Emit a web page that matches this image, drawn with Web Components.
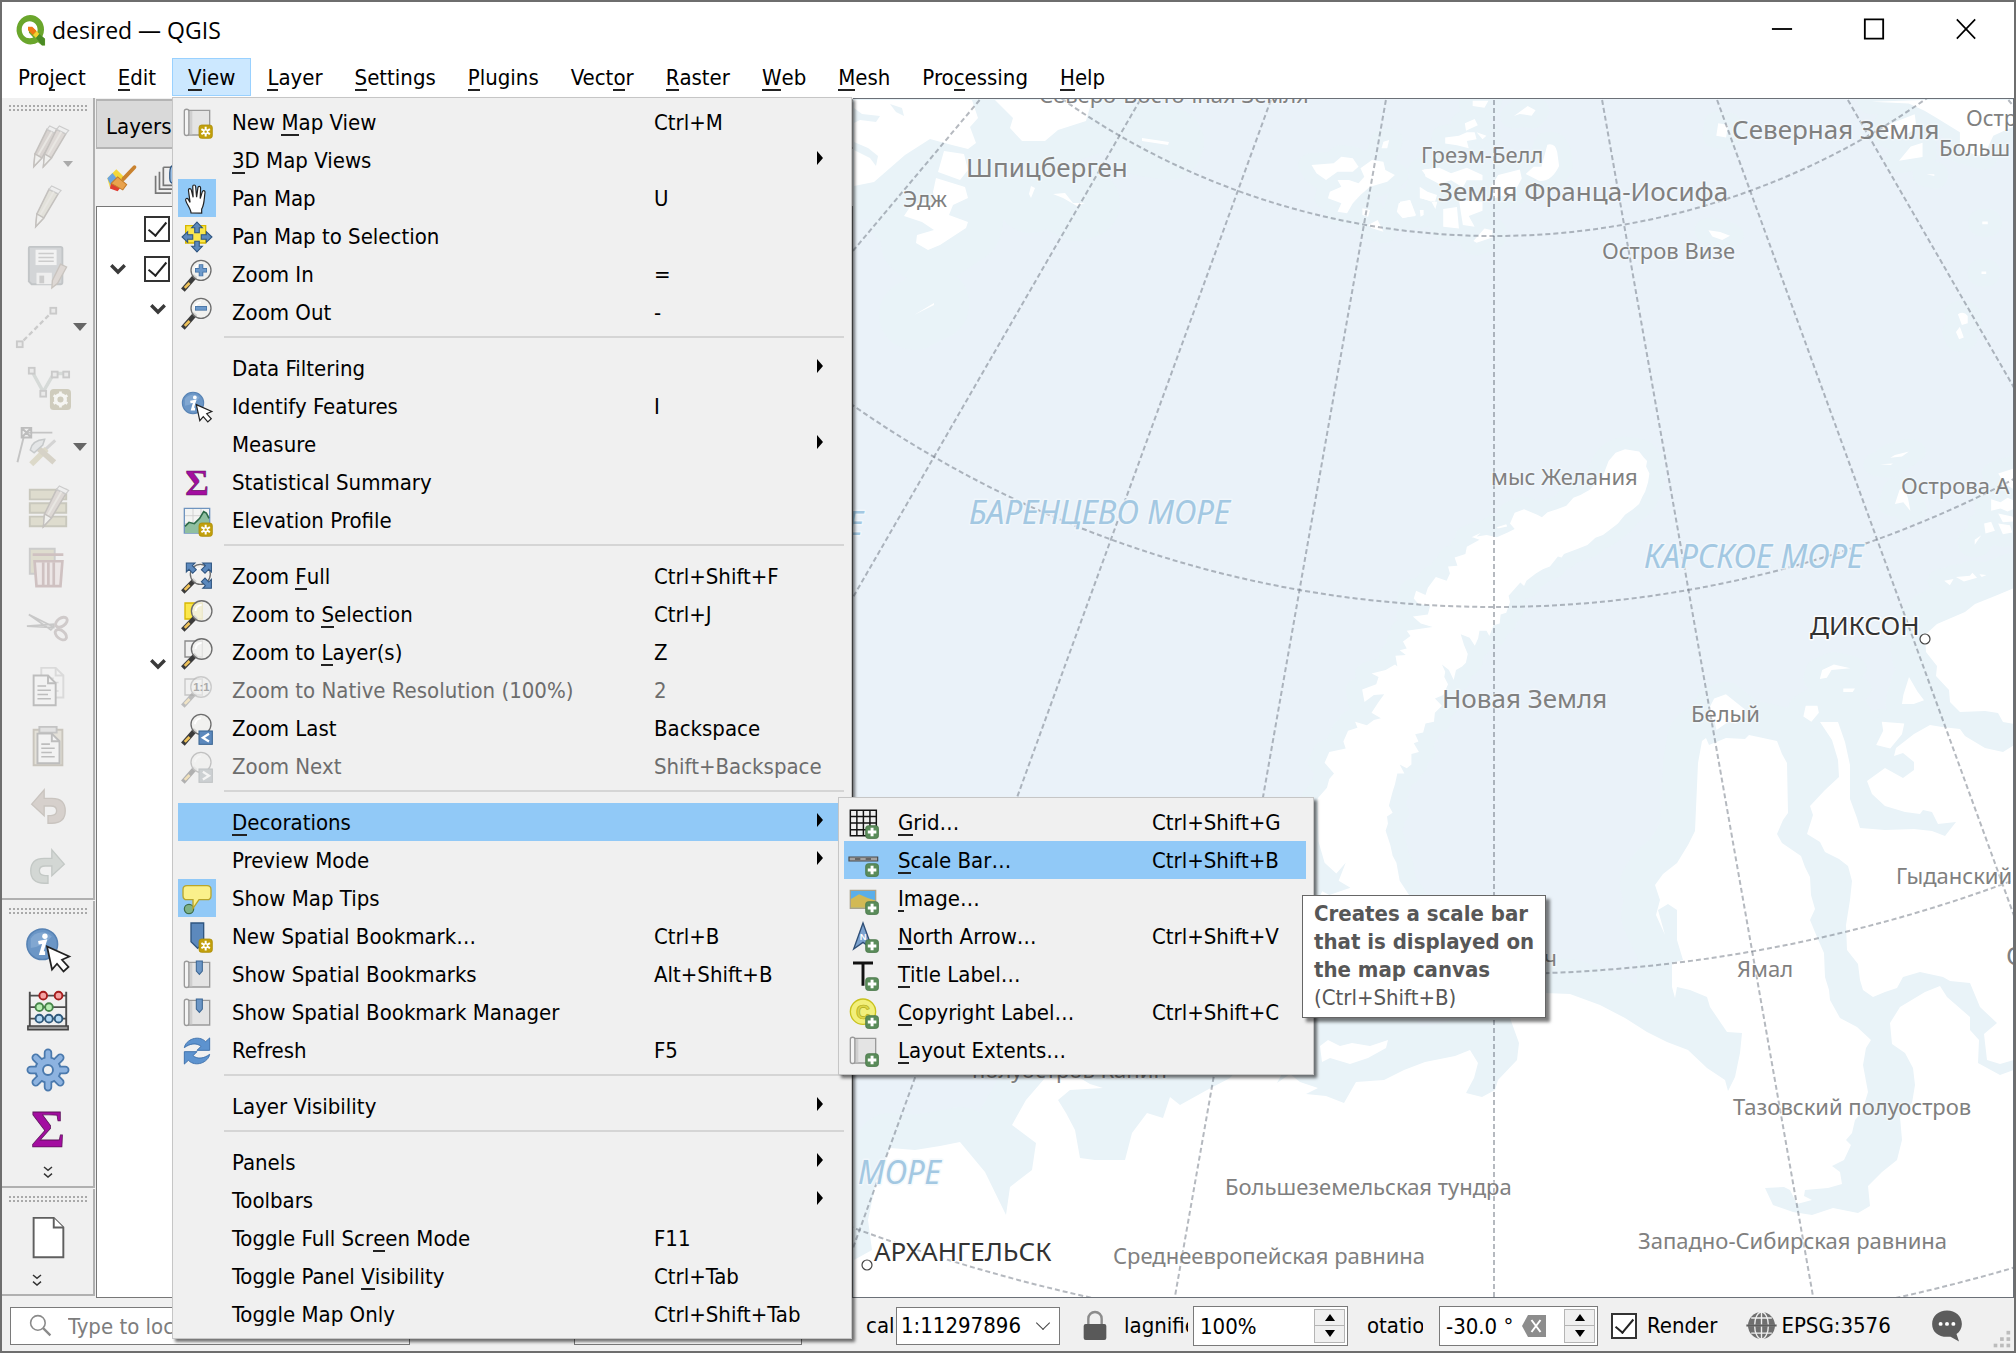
<!DOCTYPE html>
<html lang="en">
<head>
<meta charset="utf-8">
<title>desired — QGIS</title>
<style>
  html, body { margin: 0; height: 100%; }
  body { font: 22px/26px "DejaVu Sans Condensed", "Noto Sans", sans-serif; color: #000; background: #f0f0f0; overflow: hidden; }
</style>
</head>
<body>
<qgis-window></qgis-window>

<script>
/* ---------- icon library (24 unit grid) ---------- */
const glass = (x, y, r, o = 1) => `<g opacity="${o}"><path d="M${x - r * .7} ${y + r * .7}L2.6 22" stroke="#3b3b3b" stroke-width="3.6" stroke-linecap="square"/><path d="M6.4 18L2.8 21.7" stroke="#f0c35a" stroke-width="2"/><circle cx="${x}" cy="${y}" r="${r}" fill="#f1f1ef" fill-opacity=".85" stroke="#6d6d6d" stroke-width="1"/><path d="M${x - r * .6} ${y}a${r * .6} ${r * .6} 0 0 1 ${r * .6} -${r * .6}" stroke="#fff" stroke-width="1.4" fill="none"/></g>`;
const star = `<rect x="13.5" y="13.5" width="10" height="10" rx="2" fill="#c2a00c" stroke="#a98b06" stroke-width=".6"/><path d="M18.5 14.8v7.4M15.3 16.6l6.4 3.8M21.7 16.6l-6.4 3.8" stroke="#fff" stroke-width="1.5"/><circle cx="18.5" cy="18.5" r="1.9" fill="#fff"/><circle cx="18.5" cy="18.5" r=".9" fill="#c2a00c"/>`;
const plus = `<rect x="14" y="14" width="9.6" height="9.6" rx="2" fill="#5a8c5a" stroke="#477547" stroke-width=".6"/><path d="M18.8 15.6v6.4M15.6 18.8h6.4" stroke="#fff" stroke-width="2.2"/>`;
const scroll = `<path d="M4.5 2.5h17v18.5h-17z" fill="#e4e4e4" stroke="#9a9a9a"/><path d="M7 3v17.5" stroke="#cfcfcf" stroke-width="3"/><path d="M2.5 3.2q0-1.5 1.7-1.5t1.7 1.5v16.5q0 1.7-1.7 1.7t-1.7-1.7z" fill="#f4f4f4" stroke="#9a9a9a"/>`;
const info = `<circle cx="9" cy="9" r="8" fill="#6b96c6" stroke="#5682b4" stroke-width=".8"/><path d="M3 6a7 7 0 0 1 11-1q-4 5-11 6z" fill="#8fb2d8" opacity=".6"/><circle cx="10.4" cy="4.8" r="1.4" fill="#fff"/><path d="M7 8.2l3.3-.6-1.8 6h2" stroke="#fff" stroke-width="1.9" fill="none"/><path d="M11.5 10.2l2.6 12 2.6-3 3.4 4 2.6-2.4-3.4-3.7 3.8-1.7z" fill="#fff" stroke="#222" stroke-width=".9"/>`;
const pencil = (x, c) => `<g transform="translate(${x} 0)"><path d="M12.5 2.8l4.8 2.3-7.5 12.6-4.2 4.5.6-6.6z" fill="${c}" stroke="#c4c1be" stroke-width=".8"/><path d="M12.5 2.8l1.4-1.8 4.9 2.4-1.5 1.7z" fill="#efefef" stroke="#ccc" stroke-width=".6"/><path d="M6.2 15.6l3.6 2.1-4.2 4.5z" fill="#f0f0ee" stroke="#c4c1be" stroke-width=".7"/><path d="M15 4L8 16" stroke="#e8e6e2" stroke-width="1"/></g>`;
const square = (x, y) => `<rect x="${x}" y="${y}" width="3" height="3" fill="#eaeaea" stroke="#cacaca" stroke-width="1"/>`;
const sheet = (x, y, c) => `<path d="M${x} ${y}h7.5l4 4v11.500h-11.500z" fill="#f2f2f2" stroke="${c}" stroke-width="1"/><path d="M${x + 7.5} ${y}v4h4" fill="none" stroke="${c}"/><path d="M${x + 2} ${y + 5.500}h4.500m-4.500 2.200h7m-7 2.200h5.500m-5.500 2.200h7" stroke="${c}" stroke-width=".8"/>`;
const bookmark = `<path d="M11.500 1.500h4.500v7.500l-2.200 2.500-2.300-2.500z" fill="#6b96c6" stroke="#3d6794" stroke-width=".8"/>`;
const ICONS = {
  newmap: scroll + star,
  pan: `<path d="M7.500 22.500c0-3-3-6-4-9.500-.4-1.500 1.300-2 2-.7l1.300 2.200L5.600 5.600c-.2-1.700 1.700-2 2.100-.4l1.400 5.500-.3-8c0-1.600 2-1.600 2.200 0l.7 8 1-7.200c.2-1.500 2.100-1.300 2 .2l-.3 8 1.600-5.200c.5-1.400 2.200-.9 2 .6-.7 4.700-.4 9-2.500 12.500v3z" fill="#fff" stroke="#222" stroke-width=".9"/>`,
  pansel: `<path d="M3.500 3.500h15v13h-15z" fill="#fbe74b" stroke="#d8b800"/><g fill="#5c89bd" stroke="#2f5580" stroke-width=".8"><path d="M12 .8l4 4.200h-2.300v3.800h-3.400v-3.800h-2.300zM12 23.200l4-4.200h-2.300v-3.800h-3.400v3.800h-2.300zM.8 12l4.200-4v2.300h3.800v3.400h-3.800v2.300zM23.200 12l-4.200-4v2.300h-3.800v3.400h3.800v2.300z"/></g>`,
  zoomin: glass(15, 8.500, 7.500) + `<path d="M15 4v9M10.500 8.500h9" stroke="#3f6da0" stroke-width="3.400"/><path d="M15 4.500v8M11 8.500h8" stroke="#6d9acb" stroke-width="2.200"/>`,
  zoomout: glass(15, 8.500, 7.500) + `<path d="M10.500 8.500h9" stroke="#3f6da0" stroke-width="3.400"/><path d="M11 8.500h8" stroke="#6d9acb" stroke-width="2.200"/>`,
  identify: info,
  sigma: `<text x="12" y="21" text-anchor="middle" font-family="Liberation Serif" font-weight="bold" font-size="27" fill="#a30da0" stroke="#5a1458" stroke-width=".4">Σ</text>`,
  elev: `<path d="M2.500 2.500h19v18.500h-19z" fill="#f3f4f3" stroke="#6f94bf"/><path d="M9 3v18M15 3v18M3 8h18M3 14h18" stroke="#d0d0d0" stroke-width=".7"/><path d="M3 16l3-3 4 1 4-4 3-5 2 1 2 4v11h-18z" fill="#8fbfa0"/><path d="M3 16l3-3 4 1 4-4 3-5 2 1 2 4" fill="none" stroke="#2d6a48" stroke-width="1.200"/>` + star,
  zoomfull: glass(14.500, 10, 7.500) + `<g fill="#5c89bd" stroke="#2f5580" stroke-width=".8"><path d="M4 1.500h6.500l-2 2 3 3-2.700 2.700-2.800-3-2 2zM22.800 1.500h-6.500l2 2-3 3 2.700 2.700 2.800-3 2 2zM22.800 20.500h-6.500l2-2-3-3 2.700-2.700 2.800 3 2-2z"/></g>`,
  zoomsel: `<path d="M3 3h13v12h-13z" fill="#fbe74b" stroke="#d8b800"/>` + glass(15.500, 9, 7.700),
  zoomlayer: `<path d="M3 3h13v12h-13z" fill="#f0f0f0" stroke="#8a8a8a"/>` + glass(15.500, 9, 7.700),
  zoomnative: `<g opacity=".4"><path d="M3 3h13v12h-13z" fill="#f0f0f0" stroke="#8a8a8a"/>${glass(15, 9, 7.700, .7)}</g><text x="15.300" y="12" text-anchor="middle" font-family="Liberation Sans" font-weight="bold" font-size="8.500" fill="#a9a9a9">1:1</text>`,
  zoomlast: glass(15, 8.500, 7.500) + `<rect x="13.500" y="13.500" width="10" height="10" fill="#5c89bd" stroke="#3d6794" stroke-width=".8"/><path d="M21 15.600l-4.600 2.900 4.600 2.900" stroke="#fff" stroke-width="1.700" fill="none"/>`,
  zoomnext: glass(15, 8.500, 7.500, .35) + `<rect x="13.500" y="13.500" width="10" height="10" fill="#ccd0d2" stroke="#c0c3c5" stroke-width=".8"/><path d="M16.400 15.600l4.600 2.900-4.600 2.900" stroke="#f4f4f4" stroke-width="1.700" fill="none"/>`,
  maptips: `<circle cx="6" cy="19.500" r="3.500" fill="#7fb286" stroke="#3f6e49" stroke-width=".9"/><path d="M4.500 2h15q3 0 3 3v4.500q0 3-3 3h-6l-4.500 6.500v-6.500h-4.500q-3 0-3-3v-4.500q0-3 3-3z" fill="#faf08b" stroke="#b9a52a"/>`,
  bmnew: `<path d="M7.500 1.500h9.500v15l-4.500 4-5-5z" fill="#5c89bd" stroke="#2f5580"/>` + star,
  bmshow: scroll + bookmark,
  refresh: `<g fill="#5d93cf" stroke="#3a6eaa" stroke-width=".7"><path d="M2.500 9.500c1-6 10.500-10 16-4.500l3-2.800v9.300h-9.500l3-3c-3.500-3-8.500-2-12.500 1z"/><path d="M21.500 14.500c-1 6-10.500 10-16 4.500l-3 2.800v-9.300h9.500l-3 3c3.500 3 8.500 2 12.500-1z"/></g>`,
  grid: `<path d="M2.500 2.500h19.500v19h-19.500zM7.400 2.500v19M12.300 2.500v19M17.200 2.500v19M2.500 7.200h19.500M2.500 12h19.500M2.500 17h19.500" fill="none" stroke="#111" stroke-width="1.100"/>` + plus,
  scalebar: `<path d="M1.500 9h21.500v3h-21.500z" fill="#a3a3a3" stroke="#4a4a4a" stroke-width=".9"/><path d="M6 10.500h4M14 10.500h4" stroke="#666" stroke-width="1.500"/>` + plus,
  image: `<path d="M2.500 5.500h19v13.500h-19z" fill="#5aaeea" stroke="#a9a28c"/><path d="M3 12l6-3.500 7 3 5 1.500v5.500h-18z" fill="#d2b955"/>` + plus,
  north: `<path d="M12 1.500l7 19.500-7-5-7 5z" fill="#7da3cf" stroke="#2f4f77"/><text x="12" y="14.500" text-anchor="middle" font-family="Liberation Sans" font-weight="bold" font-size="7" fill="#fff">N</text>` + plus,
  title: `<path d="M4.500 3h15M12 3v17" stroke="#111" stroke-width="2.200" fill="none"/>` + plus,
  copyright: `<circle cx="12" cy="11" r="9.500" fill="#f2ef7b" stroke="#c9c21c"/><text x="12" y="16.200" text-anchor="middle" font-family="Liberation Sans" font-weight="bold" font-size="14.500" fill="#dcd648" stroke="#b1aa1c" stroke-width=".5">C</text>` + plus,
  extents: scroll + plus,
  pencils: pencil(-1, "#d8d3d0") + pencil(4, "#ded9d6"),
  pencil: pencil(0, "#e2e1da"),
  save: `<path d="M2.500 1.500h16q1 0 1 1v17.500q0 1-1 1h-15l-1.500-1.500v-17q0-1 .5-1z" fill="#d3d5d7" stroke="#c2c5c7"/><path d="M5.500 3h11v8h-11z" fill="#f2f2f2"/><path d="M7 5h8m-8 2h8m-8 2h8" stroke="#ccc" stroke-width=".8"/><path d="M6 15h8v6h-8z" fill="#eee"/><path d="M7.500 16.500h2.500v4h-2.500z" fill="#ccc"/><path d="M18.500 10.500l3.200 1.500-4.700 8.500-3 2.500.3-4z" fill="#ded8d4" stroke="#c9c4bf" stroke-width=".7"/>`,
  digitize: `<path d="M5 19L19 5" stroke="#cbcbcb" stroke-width="1.200" stroke-dasharray="2.500 1.500"/>` + square(1.500, 19.500) + square(19, 2),
  addfeature: `<path d="M3.500 3.500l6 11 5.500-9.500h6" stroke="#d6dad8" stroke-width="1.800" fill="none"/>` + square(2, 2) + square(8, 14) + square(14, 4) + square(20, 4) + `<rect x="13" y="13" width="11" height="11" rx="2" fill="#cfccbd"/><circle cx="18.500" cy="18.500" r="2.500" fill="none" stroke="#f5f5f2" stroke-width="1.800"/><path d="M18.500 14.300v2M18.500 20.700v2M14.900 16.400l1.700 1M20.400 19.600l1.700 1M22.100 16.400l-1.700 1M16.600 19.600l-1.700 1" stroke="#f5f5f2" stroke-width="1.400"/>`,
  vertex: `<path d="M6 4.500h14M5 7L1.800 20" stroke="#c4c4c4" stroke-width="1"/><path d="M4 2h5v5h-5zM4.500 2.500l4 4m0-4l-4 4" fill="none" stroke="#bdbdbd"/><path d="M21.500 8.500l-7.500 7" stroke="#d4d4d4" stroke-width="1.600"/><path d="M9 21l8-8" stroke="#dcd9c9" stroke-width="3"/><path d="M13 13l8 7" stroke="#d6d2c7" stroke-width="3"/><path d="M8.500 13.500q1-5 7.500-5.500l-1 3-4.500 4z" fill="#e4e6e7" stroke="#c6c9ca" stroke-width=".8"/>`,
  table: `<g fill="#dedcce" stroke="#c9c8bd"><path d="M2.500 3h19v5h-19zM2.500 10h19v5h-19zM2.500 17h19v5h-19z"/></g><g transform="translate(4 0)">${pencil(0, "#ddd8d5")}</g>`,
  trash: `<path d="M2.500 2.500h13v13h-13z" fill="#dedcce" stroke="#ccc"/><path d="M5 9h14.500l-1 13h-12.500z" fill="#ece6e6" stroke="#cfc1c1" stroke-width="1.400"/><path d="M4 5.500h16M9.500 9.500v12M12.200 9.500v12M15 9.500v12" stroke="#cfc1c1" stroke-width="1.400"/>`,
  scissors: `<path d="M2 5.500l13 6.500-1.500 1.500zM1 11.500l14-1v1.800z" fill="#eee" stroke="#c8c8c8" stroke-width=".9"/><g fill="none" stroke="#cfcaca" stroke-width="1.500"><ellipse cx="19" cy="9.500" rx="3.400" ry="2.100" transform="rotate(-35 19 9.500)"/><ellipse cx="18.700" cy="16" rx="3.400" ry="2.100" transform="rotate(40 18.700 16)"/></g>`,
  copy: `<g opacity=".55">${sheet(8.500, 2, "#c9c9c9")}</g>` + sheet(4.500, 6, "#bdbdbd"),
  paste: `<path d="M4.500 3h15v18.500h-15z" fill="#e4e1d9" stroke="#c9c5bd"/><path d="M7.500 1.500h9v3h-9z" fill="#e2e2e2" stroke="#c4c4c4"/>` + sheet(6.500, 5, "#bdbdbd"),
  undo: `<path d="M3.500 10.500l6.500-7.500v4.500h4q7 0 7 6.500t-7 6.500h-2v-4h1.500q3 0 3-2.500t-3-2.500h-3.500v5z" fill="#d6d0cc" stroke="#c9c4bf" stroke-width=".7"/>`,
  redo: `<path d="M20.500 10.500l-6.500-7.500v4.500h-4q-7 0-7 6.500t7 6.500h2v-4h-1.500q-3 0-3-2.500t3-2.500h3.500v5z" fill="#d3d7d4" stroke="#c3c8c5" stroke-width=".7"/>`,
  abacus: `<path d="M2.500 2.500v18M21.500 2.500v18M3 4.500h18.500M3 10.500h18.500M3 16.500h18.500" stroke="#4d4d4d" fill="none"/><path d="M1.500 20.300h21v2h-21z" fill="#999" stroke="#444" stroke-width=".8"/><g stroke-width="1"><g fill="#f5a3a3" stroke="#a51d1d"><circle cx="9.500" cy="4.500" r="2"/><circle cx="17.500" cy="4.500" r="2"/></g><g fill="#b9efb4" stroke="#47854a"><circle cx="7.500" cy="10.500" r="2"/><circle cx="12.500" cy="10.500" r="2"/></g><g fill="#b5daf5" stroke="#305a7c"><circle cx="7.500" cy="16.500" r="2"/><circle cx="12.500" cy="16.500" r="2"/><circle cx="17.500" cy="16.500" r="2"/></g></g>`,
  gear: `<g stroke="#4a79ad" stroke-width="4.400" stroke-linecap="round"><path d="M12 3v18M3 12h18M5.600 5.600l12.800 12.800M18.400 5.600L5.600 18.400"/></g><circle cx="12" cy="12" r="6.600" fill="#8db3e0" stroke="#4a79ad"/><g stroke="#8db3e0" stroke-width="2.600" stroke-linecap="round"><path d="M12 3v18M3 12h18M5.600 5.600l12.800 12.800M18.400 5.600L5.600 18.400"/></g><circle cx="12" cy="12" r="2.600" fill="#efefef" stroke="#4a79ad"/>`,
  page: `<path d="M4.500 1.500h10.500l5 5v15.500h-15.500z" fill="#fff" stroke="#5f5f5f"/><path d="M15 1.500v5h5" fill="#fff" stroke="#5f5f5f"/>`,
  brush: `<path d="M1 11l7-7 7 7-6 9-6-2z" fill="#f4d73b"/><path d="M1 11l4-4 4 5-5 5z" fill="#6ba4e0"/><path d="M4 15l6-2 3 3-4 5-6-2z" fill="#e03c31"/><path d="M9 10l7 6-3 4-9-5z" fill="#e9a24c" stroke="#c47b2a" stroke-width=".8"/><path d="M13.500 11.500l8.500-9" stroke="#c9822f" stroke-width="3" stroke-linecap="round"/>`,
  group: `<path d="M8 2.500h14M8 2.500v14h10M5 6v13.500h12M2 9v13.500h12" fill="none" stroke="#777" stroke-width="1.300"/><path d="M13 7q0-6 3-6v14q-3 0-3-4z" fill="#9fc2e6" stroke="#2f5580"/><rect x="15" y="16" width="9" height="8" fill="#5a8c5a"/>`,
  logo: `<path d="M12 .8a10.500 11 0 1 0 6 20.300l3 2.500h2.300v-5l-2-1.800a11 11 0 0 0 1.200-5A10.500 11 0 0 0 12 .8zm-.3 4.700c3.500 0 6 2.700 6 6.300 0 .7-.1 1.200-.3 1.800l-3-3h-3.200v3.500l3.300 3.500c-.9.400-1.800.6-2.800.6-3.500 0-5.900-2.800-5.900-6.400s2.400-6.300 5.900-6.300z" fill="#6aa62c"/><path d="M10.500 9.500h3.200l3.300 3.300-2.800 3-3.700-3.700z" fill="#ee7913"/><path d="M17 12.800l2 2.200-2.500 3-2.300-2.200z" fill="#f3d02f"/><path d="M16.500 18l2.500-3 4 3.500v5h-2z" fill="#4a8a25"/>`,
  search: `<circle cx="9.500" cy="9.500" r="7" fill="none" stroke="#8a8a8a" stroke-width="1.500"/><path d="M14.500 14.500l7 7" stroke="#8a8a8a" stroke-width="2.200"/>`,
  lock: `<path d="M7 11v-4.500a5 5 0 0 1 10 0v4.500" fill="none" stroke="#8c8c8c" stroke-width="1.800"/><rect x="3.500" y="10.500" width="17" height="12" rx="1.500" fill="#595959"/>`,
  globe: `<circle cx="12" cy="12" r="9.800" fill="#6f6f6f"/><path d="M12 2v20M2.500 12h19M4.500 6.500h15M4.500 17.500h15" stroke="#efefef" stroke-width="1" fill="none"/><ellipse cx="12" cy="12" rx="5" ry="9.800" fill="none" stroke="#efefef"/><path d="M1 12h22" stroke="#5e5e5e" stroke-width="1.500"/>`,
  chat: `<path d="M12 1c6 0 10.500 4 10.500 9.500 0 3-1.500 5.400-3.800 7.200l1.800 5.300-6-3.500c-8 1-13-3-13-9C1.500 5 6 1 12 1z" fill="#5c5c5c"/><g fill="#fff"><circle cx="7.500" cy="10.500" r="1.400"/><circle cx="12" cy="10.500" r="1.400"/><circle cx="16.500" cy="10.500" r="1.400"/></g>`,
  more: `<path d="M6 3l6 5 6-5M6 13l6 5 6-5" fill="none" stroke="#333" stroke-width="2.200"/>`,
  expand: `<path d="M3 7l9 9 9-9" fill="none" stroke="#3a3a3a" stroke-width="4.500"/>`,
  erase: `<path d="M0 12l6-11h18v22h-18z" fill="#8d8d8d"/><path d="M9.500 6l9 12M18.500 6l-9 12" stroke="#fff" stroke-width="2"/>`,
  grip: `<g fill="#bcbcbc"><rect x="18" y="2" width="4" height="4"/><rect x="18" y="9" width="4" height="4"/><rect x="18" y="16" width="4" height="4"/><rect x="11" y="9" width="4" height="4"/><rect x="11" y="16" width="4" height="4"/><rect x="4" y="16" width="4" height="4"/></g>`,
  minimize: `<path d="M1 12h22" stroke="#000" stroke-width="2"/>`,
  maximize: `<path d="M2 1.500h20v21h-20z" stroke="#000" stroke-width="2" fill="none"/>`,
  close: `<path d="M2 1.500l20 21M22 1.500l-20 21" stroke="#000" stroke-width="1.800"/>`
};

/* ---------- base class: open shadow root filled from a string ---------- */
class Part extends HTMLElement {
  connectedCallback() {
    if (this.shadowRoot) return;
    const t = document.createElement("template");
    t.innerHTML = `<style>*{box-sizing:border-box}button{font:inherit;color:inherit;background:none;border:0;padding:0;margin:0;text-align:left}</style>` + this.render();
    this.attachShadow({ mode: "open" }).append(t.content.cloneNode(true));
  }
}
const define = (name, render) => customElements.define(name, class extends Part { render() { return render(this); } });

define("q-icon", el => `<style>:host{display:block;width:var(--icon,32px);height:var(--icon,32px);flex:none}svg{display:block;width:100%;height:100%;overflow:visible}</style>
<svg viewBox="0 0 24 24" fill="none" aria-hidden="true">${ICONS[el.getAttribute("name")]}</svg>`);

/* ---------- title bar ---------- */
define("title-bar", () => `<style>
:host{display:flex;align-items:center;height:56px;box-sizing:border-box;background:#fff;padding:0 2px 0 12px;font:23px/28px "Open Sans",sans-serif}
h1{font:inherit;margin:0 auto 0 6px}
q-icon{--icon:32px}
button{width:92px;height:56px;display:flex;justify-content:center;align-items:center;padding-bottom:2px}
button q-icon{--icon:22px}
</style>
<q-icon name="logo"></q-icon><h1>desired — QGIS</h1>
<button aria-label="Minimize"><q-icon name="minimize"></q-icon></button>
<button aria-label="Maximize"><q-icon name="maximize"></q-icon></button>
<button aria-label="Close"><q-icon name="close"></q-icon></button>`);

/* ---------- menus ---------- */
define("menu-title", el => `<style>
:host{display:block;position:relative}
button{height:38px;padding:2px 15px 0;border:1px solid transparent;white-space:nowrap;display:block}
:host([open]) button{background:#cce8ff;border-color:#99d1ff}
::slotted(u){text-decoration:none;border-bottom:2px solid #222;line-height:22px;display:inline-block}
::slotted(menu-popup){position:absolute;left:0;top:39px;z-index:5}
</style><button><slot></slot></button><slot name="popup"></slot>`);

define("menu-popup", () => `<style>
:host{display:block;box-sizing:border-box;background:#f0f0f0;border:1px solid #c6c6c6;padding:5px 7px 5px 5px;box-shadow:3px 3px 3px rgba(0,0,0,.55);width:var(--menu-width)}
</style><slot></slot>`);

define("menu-line", () => `<style>:host{display:flex;height:18px;box-sizing:border-box;padding:5px 0 0 46px}i{flex:1;height:2px;background:#d5d5d5}</style><i></i>`);

define("menu-entry", el => {
  const icon = el.getAttribute("icon"), key = el.getAttribute("key");
  return `<style>
:host{display:block;position:relative}
:host([active]){background:#91c9f7}
:host([disabled]){color:#6d6d6d}
button{width:100%;height:38px;display:flex;align-items:center;white-space:nowrap}
.ic{width:38px;height:38px;margin-right:16px;display:flex;align-items:center;justify-content:center;padding-top:2px;flex:none}
:host([checked]) .ic{background:#91c9f7}
.tx{flex:1;padding-top:2px}
kbd{font:inherit;width:var(--key-width);flex:none;padding-top:2px}
.sub{width:0;height:0;border:solid transparent;border-width:7px 0 7px 6px;border-left-color:#000;margin:0 21px 4px 0}
::slotted(u){text-decoration:none;border-bottom:2px solid #222;line-height:22px;display:inline-block}
::slotted(menu-popup){position:absolute;left:calc(100% - 6px);top:-6px;z-index:6}
::slotted(tool-tip){position:absolute;left:calc(100% - 4px);top:54px;z-index:7}
</style><button><span class="ic">${icon ? `<q-icon name="${icon}"></q-icon>` : ""}</span><span class="tx"><slot></slot></span>${key ? `<kbd>${key}</kbd>` : ""}${el.hasAttribute("sub") ? `<span class="sub"></span>` : ""}</button><slot name="over"></slot>`;
});

define("tool-tip", () => `<style>
:host{display:block;box-sizing:border-box;background:#fff;border:1px solid #666;padding:4px 11px 5px;color:#575757;line-height:28px;white-space:nowrap;box-shadow:4px 4px 3px rgba(0,0,0,.5)}
</style><slot></slot>`);

define("menu-bar", () => `<style>
:host{display:flex;height:40px;background:#fff;position:relative;z-index:4}
.view{--menu-width:680px;--key-width:190px}
.deco{--menu-width:476px;--key-width:154px}
</style>
<menu-title>Pro<u>j</u>ect</menu-title><menu-title><u>E</u>dit</menu-title>
<menu-title open><u>V</u>iew
<menu-popup slot="popup" class="view">
<menu-entry icon="newmap" key="Ctrl+M">New <u>M</u>ap View</menu-entry>
<menu-entry sub><u>3</u>D Map Views</menu-entry>
<menu-entry icon="pan" checked key="U">Pan Map</menu-entry>
<menu-entry icon="pansel">Pan Map to Selection</menu-entry>
<menu-entry icon="zoomin" key="=">Zoom In</menu-entry>
<menu-entry icon="zoomout" key="-">Zoom Out</menu-entry>
<menu-line></menu-line>
<menu-entry sub>Data Filtering</menu-entry>
<menu-entry icon="identify" key="I">Identify Features</menu-entry>
<menu-entry sub>Measure</menu-entry>
<menu-entry icon="sigma">Statistical Summary</menu-entry>
<menu-entry icon="elev">Elevation Profile</menu-entry>
<menu-line></menu-line>
<menu-entry icon="zoomfull" key="Ctrl+Shift+F">Zoom <u>F</u>ull</menu-entry>
<menu-entry icon="zoomsel" key="Ctrl+J">Zoom to <u>S</u>election</menu-entry>
<menu-entry icon="zoomlayer" key="Z">Zoom to <u>L</u>ayer(s)</menu-entry>
<menu-entry icon="zoomnative" key="2" disabled>Zoom to Native Resolution (100%)</menu-entry>
<menu-entry icon="zoomlast" key="Backspace">Zoom Last</menu-entry>
<menu-entry icon="zoomnext" key="Shift+Backspace" disabled>Zoom Next</menu-entry>
<menu-line></menu-line>
<menu-entry sub active><u>D</u>ecorations
  <menu-popup slot="over" class="deco">
  <menu-entry icon="grid" key="Ctrl+Shift+G"><u>G</u>rid…</menu-entry>
  <menu-entry icon="scalebar" key="Ctrl+Shift+B" active><u>S</u>cale Bar…<tool-tip slot="over"><b>Creates a scale bar<br>that is displayed on<br>the map canvas</b><br>(Ctrl+Shift+B)</tool-tip></menu-entry>
  <menu-entry icon="image"><u>I</u>mage…</menu-entry>
  <menu-entry icon="north" key="Ctrl+Shift+V"><u>N</u>orth Arrow…</menu-entry>
  <menu-entry icon="title"><u>T</u>itle Label…</menu-entry>
  <menu-entry icon="copyright" key="Ctrl+Shift+C"><u>C</u>opyright Label…</menu-entry>
  <menu-entry icon="extents"><u>L</u>ayout Extents…</menu-entry>
  </menu-popup>
</menu-entry>
<menu-entry sub>Preview Mode</menu-entry>
<menu-entry icon="maptips" checked>Show Map Tips</menu-entry>
<menu-entry icon="bmnew" key="Ctrl+B">New Spatial Bookmark…</menu-entry>
<menu-entry icon="bmshow" key="Alt+Shift+B">Show Spatial Bookmarks</menu-entry>
<menu-entry icon="bmshow">Show Spatial Bookmark Manager</menu-entry>
<menu-entry icon="refresh" key="F5">Refresh</menu-entry>
<menu-line></menu-line>
<menu-entry sub>Layer Visibility</menu-entry>
<menu-line></menu-line>
<menu-entry sub>Panels</menu-entry>
<menu-entry sub>Toolbars</menu-entry>
<menu-entry key="F11">Toggle Full Scr<u>e</u>en Mode</menu-entry>
<menu-entry key="Ctrl+Tab">Toggle Panel <u>V</u>isibility</menu-entry>
<menu-entry key="Ctrl+Shift+Tab">Toggle Map Only</menu-entry>
</menu-popup></menu-title>
<menu-title><u>L</u>ayer</menu-title><menu-title><u>S</u>ettings</menu-title><menu-title><u>P</u>lugins</menu-title>
<menu-title>Vect<u>o</u>r</menu-title><menu-title><u>R</u>aster</menu-title><menu-title><u>W</u>eb</menu-title><menu-title><u>M</u>esh</menu-title>
<menu-title>Pro<u>c</u>essing</menu-title><menu-title><u>H</u>elp</menu-title>`);

/* ---------- vertical tool bars ---------- */
define("tool-strip", () => `<style>
:host{display:flex;flex-direction:column;border-right:2px solid #b0b0b0;border-bottom:2px solid #b0b0b0;padding-bottom:1px}
i{height:7px;margin:6px 4px 6px 6px;background:radial-gradient(circle,#a9a9a9 1px,transparent 1.500px) 0 0/4px 4px;flex:none}
</style><i></i><slot></slot>`);
define("tool-button", el => `<style>
:host{display:block}
button{width:100%;height:60px;display:flex;align-items:center;justify-content:center;position:relative}
q-icon{--icon:46px}
:host([menu]) q-icon{margin-right:22px}
:host([menu]) button::after,:host([corner]) button::after{content:"";position:absolute;right:6px;top:26px;border:solid transparent;border-width:8px 7px 0;border-top-color:#666}
:host([corner]) button::after{right:20px;top:44px;border-width:6px 5px 0;border-top-color:#aaa}
:host([more]) button{height:25px}:host([more]) q-icon{--icon:16px}
:host([left]) q-icon{margin-right:22px}
</style><button aria-label="${el.getAttribute("icon")}"><q-icon name="${el.getAttribute("icon")}"></q-icon></button>`);
define("tool-column", () => `<style>:host{display:flex;flex-direction:column;width:93px;flex:none;gap:1px}</style>
<tool-strip><tool-button icon="pencils" corner></tool-button><tool-button icon="pencil"></tool-button><tool-button icon="save"></tool-button><tool-button icon="digitize" menu></tool-button><tool-button icon="addfeature"></tool-button><tool-button icon="vertex" menu></tool-button><tool-button icon="table"></tool-button><tool-button icon="trash"></tool-button><tool-button icon="scissors"></tool-button><tool-button icon="copy"></tool-button><tool-button icon="paste"></tool-button><tool-button icon="undo"></tool-button><tool-button icon="redo"></tool-button></tool-strip>
<tool-strip><tool-button icon="identify"></tool-button><tool-button icon="abacus"></tool-button><tool-button icon="gear"></tool-button><tool-button icon="sigma"></tool-button><tool-button icon="more" more></tool-button></tool-strip>
<tool-strip><tool-button icon="page"></tool-button><tool-button icon="more" more left></tool-button></tool-strip>`);

/* ---------- layers dock ---------- */
define("check-box", el => `<style>
:host{display:inline-flex}label{display:flex;align-items:center;gap:10px}
input{appearance:none;margin:0;width:26px;height:26px;border:2px solid #333;background:#fff;display:grid;place-items:center}
input:checked::after{content:"";width:8px;height:16px;border:solid #222;border-width:0 2px 2px 0;transform:rotate(40deg) translate(-1px,-2px)}
</style><label><input type="checkbox" checked aria-label="${el.getAttribute("name")}"><slot></slot></label>`);
define("layers-dock", () => `<style>
:host{display:flex;flex-direction:column;width:757px;flex:none}
h2{font:inherit;margin:1px 0 0;height:50px;background:#d9d9d9;border:solid #b4b4b4;border-width:2px 0 2px 1px;padding:13px 9px 0}
.bar{height:57px;display:flex;align-items:center;gap:16px;padding:4px 10px 0;--icon:31px}
.tree{flex:1;background:#fff;border:1px solid #777;padding-top:2px}
.row{height:40px;display:flex;align-items:center;gap:17px;--icon:18px}
.a{padding-left:47px}.b{padding-left:12px}.c{padding-left:52px}.gap{height:315px}
</style><h2>Layers</h2><div class="bar"><q-icon name="brush"></q-icon><q-icon name="group"></q-icon></div>
<div class="tree"><div class="row a"><check-box name="Layer 1"></check-box></div><div class="row b"><q-icon name="expand"></q-icon><check-box name="Layer 2"></check-box></div><div class="row c"><q-icon name="expand"></q-icon></div><div class="gap"></div><div class="row c"><q-icon name="expand"></q-icon></div></div>`);

/* ---------- map canvas: polar graticule, land and labels ---------- */
const POLE = [1494, -513];
const meridians = [-50, -40, -30, -20, -10, 0, 10, 20, 30, 40].map(a => {
  const t = Math.tan(a * Math.PI / 180);
  return `M${(POLE[0] + 613 * t).toFixed(1)} 100L${(POLE[0] + 1811 * t).toFixed(1)} 1298`;
}).join("");
const parallels = [749, 1120, 1487, 1855].map(r => `<circle cx="${POLE[0]}" cy="${POLE[1]}" r="${r}"/>`).join("");
const LAND = `
<path transform="translate(1280 420) scale(.4694 .3571)" d="M735 82L765 88 775 105 782 115 780 130 787 150 784 175 778 200 772 215 765 235 752 250 735 265 720 290 700 310 688 322 672 330 655 350 632 362 605 375 600 385 592 382 575 410 560 418 545 430 525 450 520 465 512 455 495 480 487 492 490 510 482 540 470 545 468 570 455 575 446 605 440 590 425 590 422 612 415 632 404 610 385 600 392 630 400 655 396 680 388 690 375 700 370 728 360 700 345 685 352 705 350 720 358 740 348 770 330 780 345 800 330 820 328 845 310 850 305 875 288 880 295 900 285 905 296 930 280 935 280 965 270 975 255 965 265 990 250 990 245 1020 240 1040 232 1080 240 1100 228 1110 230 1130 225 1150 235 1190 240 1220 248 1240 255 1290 275 1330 300 1400 60 1400 90 1320 105 1330 150 1310 125 1290 140 1240 120 1270 95 1240 82 1180 80 1060 100 1030 105 1005 115 990 95 960 105 930 140 920 135 900 145 870 165 862 160 845 185 855 200 840 215 835 195 820 210 790 222 768 200 770 180 790 175 755 205 740 210 720 195 710 225 700 245 685 250 690 246 660 268 658 255 645 270 640 262 620 278 605 270 590 325 580 300 570 283 550 315 545 320 520 295 515 285 500 290 478 310 490 315 470 332 440 355 450 362 430 358 410 378 408 372 385 395 375 398 355 425 335 410 328 440 322 462 328 485 315 500 305 490 290 500 260 520 250 548 265 558 272 570 258 590 250 610 240 625 218 640 210 660 195 690 150 700 115 715 92zM462 300l20-8 2 6-20 6zM408 328l20-12-12 14zM950 768L990 810 985 840 970 850 955 845 930 868 925 840 905 830 925 780zM1340 720L1358 760 1372 785 1350 795 1325 795 1328 770zM1282 845L1330 850 1325 880 1300 920 1270 910 1285 870zM1120 800L1145 800 1148 820 1132 845 1115 830zM1150 725L1155 700 1180 685 1215 695 1175 700 1165 722zM1200 752h25l-5 10h-20zM1310 98l30-10-15 14-25 4zM1278 124l28-2-5 4zM1330 190l8 30 5 35-15-25-18 5 10-40zM1415 450l20-5-8 18zM1440 440l30-4 5-8 10 14-28 10zM1490 432l15 2-10 6zM1530 150l35-15v60l-20-15zM1515 222l20 8 15-12 20 12v16l-20 10-15-8-20 6zM1530 262l30 8 8 14-28 2zM1500 290l15-5 8 25-20 8zM1530 290l25 5 5 20-20 5zM1480 335l14-12-14 26z"/>
<path d="M2014 588L1995 596 1975 604 1965 612 1937 624 1925 635 1926 652 1937 666 1936 676 1949 690 1950 702 1960 712 1985 711 1998 713 2003 722 2014 724z"/>
<path d="M2014 745L2003 752 1985 748 1965 736 1960 729 1942 727 1930 725 1914 734 1896 748 1894 756 1903 753 1914 762 1914 770 1903 778 1885 768 1867 781 1872 794 1885 806 1905 812 1920 814 1923 810 1932 812 1938 824 1956 822 1945 836 1932 831 1914 829 1885 830 1860 828 1857 818 1850 799 1850 765 1845 742 1838 722 1820 722 1832 740 1838 760 1839 777 1825 790 1810 806 1813 815 1807 834 1820 842 1825 852 1839 859 1848 866 1852 881 1850 900 1846 925 1847 950 1858 964 1860 980 1863 990 1873 997 1885 992 1897 988 1903 977 1920 972 1943 977 1950 981 1970 983 1980 1007 1997 1023 1984 1034 1987 1060 2000 1064 2014 1060z"/>
<path d="M1702 741L1706 738 1709 745 1726 738 1745 739 1749 735 1777 741 1782 754 1787 763 1788 813 1783 820 1777 834 1782 843 1801 856 1805 867 1810 877 1811 895 1815 909 1810 920 1817 937 1824 953 1825 977 1829 990 1830 1000 1840 1018 1857 1027 1871 1040 1866 1048 1863 1065 1868 1092 1862 1112 1855 1120 1852 1133 1846 1140 1851 1145 1844 1160 1832 1166 1840 1172 1842 1184 1828 1188 1805 1190 1804 1196 1812 1200 1797 1204 1790 1190 1784 1187 1765 1188 1773 1205 1793 1212 1812 1215 1833 1208 1858 1213 1870 1206 1868 1186 1882 1172 1897 1160 1902 1140 1900 1117 1912 1103 1915 1085 1913 1068 1905 1053 1892 1044 1890 1023 1900 1007 1925 992 1940 986 1947 997 1970 1017 1970 1030 1979 1040 1978 1063 2000 1075 2014 1070V1300H854V1260L872 1250 868 1220 876 1182 890 1148 915 1150 940 1146 960 1142 985 1172 1006 1215 1010 1187 1032 1170 1036 1143 1012 1125 1026 1100 1045 1078 1080 1078 1090 1084 1103 1088 1070 1090 1058 1100 1066 1113 1075 1130 1080 1158 1095 1160 1125 1160 1132 1133 1147 1113 1163 1118 1170 1097 1180 1105 1207 1090 1230 1078 1246 1060 1270 1057 1277 1063 1290 1056 1284 1070 1277 1083 1290 1074 1300 1082 1318 1088 1306 1094 1326 1096 1344 1103 1356 1082 1384 1080 1404 1070 1425 1062 1455 1056 1470 1050 1478 1063 1474 1078 1466 1093 1482 1097 1495 1090 1498 1080 1517 1060 1519 1043 1510 1018 1480 1000 1545 993 1570 994 1600 1005 1625 1018 1647 1032 1667 1042 1688 1050 1707 1068 1725 1080 1728 1091 1735 1077 1740 1053 1742 1033 1727 1032 1710 1007 1707 997 1690 990 1677 987 1675 998 1672 987 1672 963 1683 960 1677 940 1677 910 1668 904 1658 910 1665 935 1656 915 1660 900 1655 885 1663 874 1677 863 1688 845 1695 831 1698 763z"/>
<path d="M1320 1046L1328 1040 1340 1046 1352 1043 1370 1046 1388 1040 1386 1048 1368 1058 1350 1064 1330 1058 1322 1062zM854 100H972L978 118 970 127 976 143 968 149 952 145 930 139 905 155 874 182 854 186zM944 151L964 154 968 170 960 180 938 172zM936 178L965 187 968 198 953 205 949 215 968 222 966 228 940 245 928 250 916 243 917 235 934 230 922 222 904 216 912 204 936 202 933 192zM995 100H1092L1086 121 1058 130 1045 141 1022 141 1010 128 1013 118zM1142 138l27 4-1 3-26-4zM1031 186l4 2-4 10-2-4zM1053 194l12-1 8 10 12 0-8 3-14-8zM914 315l20-12v2z"/>
<path transform="translate(840 90) scale(.3827 .3333)" d="M1232 225L1290 220 1310 200 1340 205 1355 230 1340 245 1300 245 1270 270 1245 250zM1360 235L1390 210 1420 215 1425 240 1450 255 1430 275 1385 290 1360 315 1340 340 1325 370 1300 365 1310 340 1275 325 1280 305 1310 290 1300 270 1330 270 1355 280 1370 260zM1420 155l15-5-5 25-15 0zM1365 355l20 5-5 20-15-5zM1380 405l25-15 15 35-30-10zM1460 340l30-10 15 45-35 10-15-20zM1515 290l20 15 25 10-5 20-40-10zM1520 240l40-5v25l-30-5zM1515 360l10 0 0 15-8 5z"/>
<path transform="translate(1400 0) scale(.3929 .3571)" d="M185 282h40l-10 20-30-5zM290 325l35-28 20 12-10 15-30-5zM165 345l25-12 8 18-30 15zM115 385l35-5 20-10 20 0 5 20-25 5 5 20-30-8-30-5zM195 370l25 10-10 10zM375 405q20-5 25 20l5 40q-20 45-50 42l-35-20 20-20 20 0zM60 475l40-5 30 15 40-15 40 20 0 15-40 0-10 20-30-20-30 10-35-20zM250 490l55-15 5 25-20 40-50 15-10-30zM50 525l15 15 20 10-5 15-25-10zM0 565l25-5 15 45-30 5-10-10zM80 565l15 0-5 20zM110 585l35-5 5 60-40-5zM150 560l60 5 0 25-35 15 15 30-30-5zM215 640l20 5 0 20-40 15-8-5zM785 645l30 5 25 10-20 12-25-10zM810 345l25 5-5 35-25-5zM1200 285l130-5 30 0h210v70l-60 30-25 60-60-20 0-50-60-40-30-20-40-20zM1240 350l70-30 5 40-50 30-30-15zM1300 410l30-10 0 40-60 10zM1340 488l20 0 0 5zM1420 880q15-10 25 5l0 20-15 5zM1425 915l10 30-12 5-8-20zM1482 620h14v8h-14zM1480 760h12v7h-12z"/>`;
/* inlets and fjords cut back out of the land */
const WATER = `<path d="M854 108l8 6 18 2-4 6-16-2-6 3zM890 104l12 4 2 8-8-4zM854 142l14 6 10 8-2 10-6-8-16-8z"/>`;
const LABELS = [
  ["l", 1039, 103, "Северо-Восточная Земля"], ["m", 966, 177, "Шпицберген"], ["l", 903, 207, "Эдж"], ["l", 1421, 163, "Греэм-Белл"],
  ["m", 1438, 201, "Земля Франца-Иосифа"], ["m", 1732, 139, "Северная Земля"], ["l", 1966, 126, "Остр"], ["l", 1939, 156, "Больш"],
  ["l", 1602, 259, "Остров Визе"], ["l", 1491, 485, "мыс Желания"], ["l", 1901, 494, "Острова А"], ["m", 1442, 708, "Новая Земля"],
  ["l", 1691, 722, "Белый"], ["l", 1896, 884, "Гыданский"], ["l", 1737, 977, "Ямал"], ["l", 1733, 1115, "Тазовский полуостров"],
  ["l", 1544, 966, "ч"], ["m", 2006, 965, "О"], ["l", 972, 1078, "полуостров Канин"], ["l", 1225, 1195, "Большеземельская тундра"],
  ["l", 1113, 1264, "Среднеевропейская равнина"], ["l", 1638, 1249, "Западно-Сибирская равнина"],
  ["s", 969, 524, "БАРЕНЦЕВО МОРЕ"], ["s", 1644, 568, "КАРСКОЕ МОРЕ"], ["s", 847, 535, "Е"], ["s", 858, 1184, "МОРЕ"],
  ["t", 1810, 635, "ДИКСОН"], ["t", 874, 1261, "АРХАНГЕЛЬСК"]
];
define("map-canvas", () => `<style>
:host{display:block;flex:1;min-width:0;border:solid #6b7077;border-width:1px 1px 1px 0;overflow:hidden;background:#eaf2f9}
svg{display:block;width:100%;height:100%}
text{font-family:"Noto Sans",sans-serif;fill:#808080;paint-order:stroke;stroke:#fff;stroke-opacity:.35;stroke-width:3px;stroke-linejoin:round}
.l{font-size:22px}.m{font-size:26px}.s{font-size:32px;font-style:italic;fill:#a3c8e2;stroke:#f2f8fc;stroke-opacity:.8}.t{font-size:26px;fill:#333;stroke-opacity:.9}
</style>
<svg viewBox="853 99 1160 1198" preserveAspectRatio="xMinYMin slice" role="img" aria-label="Map">
<g fill="#e9f3f8" stroke="#e9f3f8" stroke-width="70" stroke-linejoin="round">${LAND}</g>
<g fill="#fff">${LAND}</g><g fill="#e9f3f8">${WATER}</g>
<g fill="none" stroke="#6b7480" stroke-opacity=".5" stroke-width="2" stroke-dasharray="5 3"><path d="${meridians}"/>${parallels}</g>
${LABELS.map(([c, x, y, t]) => `<text class="${c}" x="${x}" y="${y}">${t}</text>`).join("")}
<g fill="#fff" stroke="#444" stroke-width="1.200"><circle cx="1925" cy="639" r="5"/><circle cx="867" cy="1265" r="5"/></g>
</svg>`);

/* ---------- status bar ---------- */
define("spin-box", el => `<style>
:host{display:flex;height:40px;box-sizing:border-box;width:var(--w);border:1px solid #7a7a7a;background:#fff;align-items:center;padding:2px 2px 2px 6px;flex:none}
input{font:inherit;flex:1;min-width:0;border:0;padding:3px 0 0;background:none;outline:0}
q-icon{--icon:24px;margin-right:18px}
.st{display:flex;flex-direction:column;width:31px;height:100%}
.st button{flex:1;background:#f0f0f0;border:1px solid #b5b5b5;display:grid;place-items:center}
.st button+button{border-top:0}
.st button::after{content:"";border:solid transparent;border-width:0 5px 7px;border-bottom-color:#000}
.st button+button::after{border-width:7px 5px 0;border-top-color:#000}
</style><input type="text" value="${el.getAttribute("value")}" aria-label="${el.getAttribute("label")}">${el.hasAttribute("clear") ? `<q-icon name="erase"></q-icon>` : ""}<span class="st"><button aria-label="Up"></button><button aria-label="Down"></button></span>`);
define("status-bar", () => `<style>
:host{display:flex;align-items:center;height:53px;box-sizing:border-box;padding:2px 2px 0 8px;background:#f0f0f0;overflow:hidden}
.find{width:400px;height:38px;border:1px solid #7a7a7a;background:#fff;display:flex;align-items:center;padding-left:17px;gap:15px;--icon:25px;flex:none}
.find input{font:inherit;border:0;flex:1;min-width:0;background:none;padding:3px 0 0}
.find input::placeholder{color:#7d7d7d;opacity:1}
.coord{font:inherit;width:228px;height:38px;border:1px solid #7a7a7a;background:#fff;margin-left:164px;flex:none}
label,.mag,.rot{white-space:nowrap;flex:none}
.cal{width:26px;margin-left:64px}
select{appearance:none;font:inherit;color:#000;width:164px;height:38px;border:1px solid #7a7a7a;padding:0 30px 0 4px;background:#fff;border-radius:0}
.combo{position:relative;margin-left:4px;display:flex}
.combo::after{content:"";position:absolute;right:12px;top:11px;width:9px;height:9px;border:solid #444;border-width:0 1px 1px 0;transform:rotate(45deg)}
.lock{--icon:32px;margin-left:19px}
.mag{width:64px;margin-left:13px;overflow:hidden}
.s1{--w:155px;margin-left:5px}
.rot{width:56px;margin-left:19px;overflow:hidden}
.s2{--w:159px;margin-left:16px}
check-box{margin-left:13px}
.crs{display:flex;align-items:center;gap:3px;margin-left:28px;--icon:33px}
.chat{--icon:34px;margin-left:auto}
.size{--icon:22px;align-self:flex-end;margin-left:26px}
</style>
<label class="find"><q-icon name="search"></q-icon><input type="text" placeholder="Type to locate (Ctrl+K)" aria-label="Locate"></label>
<input class="coord" type="text" aria-label="Coordinate">
<label class="cal" for="scale">cal</label><span class="combo"><select id="scale"><option>1:11297896</option></select></span>
<button class="lock" aria-label="Lock scale"><q-icon name="lock"></q-icon></button>
<span class="mag">lagnifie</span><spin-box class="s1" value="100%" label="Magnifier"></spin-box>
<span class="rot">otatio</span><spin-box class="s2" value="-30.0 °" label="Rotation" clear></spin-box>
<check-box name="Render">Render</check-box>
<button class="crs"><q-icon name="globe"></q-icon>EPSG:3576</button>
<button class="chat" aria-label="Messages"><q-icon name="chat"></q-icon></button>
<q-icon class="size" name="grip"></q-icon>`);

define("qgis-window", () => `<style>
:host{display:flex;flex-direction:column;box-sizing:border-box;height:100vh;border:2px solid #6e6e6e;background:#f0f0f0;overflow:hidden}
main{flex:1;min-height:0;display:flex;overflow:hidden}
tool-column{margin-right:1px}
</style><title-bar></title-bar><menu-bar></menu-bar><main><tool-column></tool-column><layers-dock></layers-dock><map-canvas></map-canvas></main><status-bar></status-bar>`);
</script>
</body>
</html>
